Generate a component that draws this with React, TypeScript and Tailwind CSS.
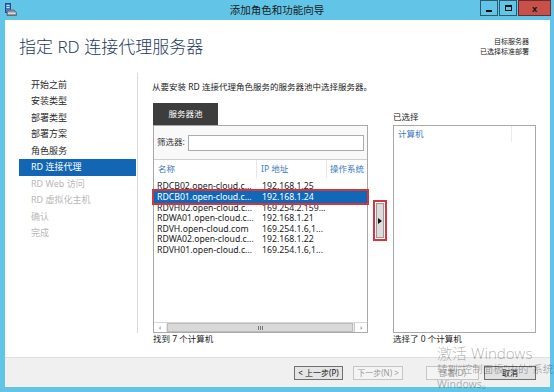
import React from "react";

const rows = [
  ["RDCB02.open-cloud.c...", "192.168.1.25"],
  ["RDCB01.open-cloud.c...", "192.168.1.24"],
  ["RDVH02.open-cloud.c...", "169.254.2.159..."],
  ["RDWA01.open-cloud.c...", "192.168.1.21"],
  ["RDVH.open-cloud.com", "169.254.1.6,1..."],
  ["RDWA02.open-cloud.c...", "192.168.1.22"],
  ["RDVH01.open-cloud.c...", "169.254.1.6,1..."],
];

const nav: [string, "n" | "s" | "d"][] = [
  ["开始之前", "n"],
  ["安装类型", "n"],
  ["部署类型", "n"],
  ["部署方案", "n"],
  ["角色服务", "n"],
  ["RD 连接代理", "s"],
  ["RD Web 访问", "d"],
  ["RD 虚拟化主机", "d"],
  ["确认", "d"],
  ["完成", "d"],
];

function ServerIcon() {
  return (
    <svg width="12" height="14" viewBox="0 0 12 14">
      <rect x="0.5" y="0.5" width="5" height="9" fill="#3b7cc4" stroke="#1d4f8a" strokeWidth="1" />
      <rect x="1.5" y="2" width="3" height="1" fill="#cfe4f7" />
      <rect x="1.5" y="4" width="3" height="1" fill="#cfe4f7" />
      <path d="M2 9 L4 7 H9 L11.5 9.5 V12.5 H2 Z" fill="#8c9299" stroke="#5a5f66" strokeWidth="0.8" />
      <rect x="3" y="9.5" width="7.5" height="1.5" fill="#d8dcdf" />
    </svg>
  );
}

export default function App() {
  return (
    <div className="relative w-[554px] h-[392px] overflow-hidden bg-[#62c5e8] flex flex-col font-['Noto_Sans','Noto_Sans_CJK_SC',sans-serif]">
      {/* title bar */}
      <div className="h-[20px] shrink-0 grid grid-cols-[1fr_auto_1fr] items-start">
        <div className="pl-[5px] pt-[3px]">
          <ServerIcon />
        </div>
        <div className="text-[10.5px] leading-[20px] text-[#1b1b1b]">添加角色和功能向导</div>
        <div className="flex justify-end pr-[3px] gap-[1px]">
          <div className="w-[18px] h-[16px] border border-[#2c5a6b] flex items-end justify-center pb-[3px]">
            <div className="w-[6px] h-[2px] bg-[#111]" />
          </div>
          <div className="w-[18px] h-[16px] border border-[#2c5a6b] flex items-center justify-center">
            <div className="w-[7px] h-[6px] border border-[#111] border-t-2" />
          </div>
          <div className="w-[33px] h-[16px] border border-[#6b2b2b] bg-[#c7504b] flex items-center justify-center text-[9px] font-bold leading-none text-[#1a1a1a]">
            x
          </div>
        </div>
      </div>

      {/* window body */}
      <div className="flex-1 min-h-0 ml-[5px] mr-[4px] mb-[5px] bg-white flex flex-col">
        {/* header */}
        <div className="h-[52px] shrink-0 flex justify-between">
          <div className="pl-[14px] pt-[17px] text-[17px] leading-[20px] font-light text-[#1e3a5c]">指定 RD 连接代理服务器</div>
          <div className="pr-[21px] pt-[17px] text-[7px] leading-[10px] text-right text-[#222]">
            <div>目标服务器</div>
            <div>已选择标准部署</div>
          </div>
        </div>

        {/* main */}
        <div className="flex-1 min-h-0 flex">
          <div className="w-[133px] shrink-0 mt-[1px] h-[260px] border-r border-[#d9d9d9] pt-[3.75px] pl-[14px] pr-[1px]">
            {nav.map(([t, s]) => (
              <div
                key={t}
                className={
                  s === "s"
                    ? "h-[16.5px] leading-[16.5px] pl-[12px] text-[9px] bg-[#1366b3] text-white"
                    : s === "d"
                    ? "h-[16.5px] leading-[16.5px] pl-[12px] text-[9px] text-[#b8b8b8]"
                    : "h-[16.5px] leading-[16.5px] pl-[12px] text-[9px] text-[#2a2a2a]"
                }
              >
                {t}
              </div>
            ))}
          </div>

          <div className="flex-1 pl-[15px] pr-[14px]">
            <div className="mt-[9px] -ml-[1px] text-[8.5px] leading-[12px] text-[#222] whitespace-nowrap">
              从要安装 RD 连接代理角色服务的服务器池中选择服务器。
            </div>
            <div className="mt-[10px] flex items-start">
              {/* left panel */}
              <div className="w-[215px] flex flex-col">
                <div className="w-[65px] h-[22px] bg-[#3d3d3d] text-white text-[8.5px] flex items-center justify-center">
                  服务器池
                </div>
                <div className="h-[208px] border border-[#a9a9a9] flex flex-col bg-white">
                  <div className="h-[34px] shrink-0 border-b border-[#cfcfcf] flex items-center px-[3px] bg-[#f9f9f9]">
                    <span className="text-[8.5px] text-[#333] w-[31px]">筛选器:</span>
                    <div className="flex-1 h-[16px] border border-[#ababab] bg-white" />
                  </div>
                  <div className="h-[18px] shrink-0 flex items-center text-[8.5px] text-[#3a78c2] whitespace-nowrap">
                    <div className="w-[103px] h-full pl-[4px] flex items-center border-r border-[#e6e6e6]">名称</div>
                    <div className="w-[70px] h-full pl-[4px] flex items-center border-r border-[#e6e6e6]">IP 地址</div>
                    <div className="flex-1 h-full pl-[3px] flex items-center overflow-hidden">操作系统</div>
                  </div>
                  <div className="flex-1 pt-[3.4px]">
                    {rows.map(([n, ip], i) =>
                      i === 1 ? (
                        <div
                          key={n}
                          className="relative z-10 h-[12px] -my-[0.7px] leading-[12px] flex text-[8.7px] whitespace-nowrap bg-[#0f69b8] text-white outline-2 outline-[#d4343c]"
                        >
                          <div className="w-[108px] shrink-0 pl-[3px]">{n}</div>
                          <div>{ip}</div>
                        </div>
                      ) : (
                        <div key={n} className="h-[10.6px] leading-[10.6px] flex text-[8.7px] whitespace-nowrap text-[#1a1a1a]">
                          <div className="w-[108px] shrink-0 pl-[3px]">{n}</div>
                          <div>{ip}</div>
                        </div>
                      )
                    )}
                  </div>
                  <div className="h-[10px] shrink-0 flex bg-[#e9e9e9] border-t border-[#d6d6d6]">
                    <div className="w-[12px] bg-white flex items-center justify-center text-[7px] leading-none text-[#555]">‹</div>
                    <div className="flex-1 mx-[1px] bg-[#d9d9d9] border border-[#bcbcbc] flex items-center justify-center">
                      <div className="flex gap-[1px]">
                        <div className="w-[1px] h-[4px] bg-[#777]" />
                        <div className="w-[1px] h-[4px] bg-[#777]" />
                        <div className="w-[1px] h-[4px] bg-[#777]" />
                      </div>
                    </div>
                    <div className="w-[13px] bg-white border-l border-[#c8c8c8] flex items-center justify-center text-[7px] leading-none text-[#555]">›</div>
                  </div>
                </div>
                <div className="text-[8.5px] leading-[12px] text-[#222]">找到 7 个计算机</div>
              </div>

              {/* arrow button */}
              <div className="ml-[5px] mt-[97px] w-[14px] h-[41px] border-2 border-[#d6353d] p-[1px]">
                <div className="w-full h-full bg-[#dcdcdc] border border-[#9a9a9a] flex items-center justify-center">
                  <svg width="4" height="6" viewBox="0 0 4 6">
                    <path d="M0 0 L4 3 L0 6 Z" fill="#111" />
                  </svg>
                </div>
              </div>

              {/* right panel */}
              <div className="ml-[6px] w-[143px] flex flex-col">
                <div className="h-[22px] pt-[8px] text-[8.5px] leading-[12px] text-[#222]">已选择</div>
                <div className="h-[208px] border border-[#a9a9a9] bg-white">
                  <div className="h-[16px] flex text-[8.5px] text-[#3a78c2]">
                    <div className="w-[118px] pl-[4px] flex items-center border-r border-[#ececec]">计算机</div>
                  </div>
                </div>
                <div className="text-[8.5px] leading-[12px] text-[#222]">选择了 0 个计算机</div>
              </div>
            </div>
          </div>
        </div>

        {/* footer */}
        <div className="h-[30px] shrink-0 border-t border-[#dfdfdf] bg-[#f0f0f0] flex justify-end items-start pt-[8px] pr-[14px]">
          <div className="w-[49px] h-[14px] border border-[#707070] bg-[#e5e5e5] text-[8px] leading-[12px] text-[#111] text-center whitespace-nowrap">
            &lt; 上一步(P)
          </div>
          <div className="ml-[10px] w-[50px] h-[14px] border border-[#c6c6c6] bg-[#f4f4f4] text-[8px] leading-[12px] text-[#9a9a9a] text-center whitespace-nowrap">
            下一步(N) &gt;
          </div>
          <div className="ml-[23px] w-[53px] h-[14px] border border-[#c6c6c6] bg-[#f4f4f4] text-[8px] leading-[12px] text-[#9a9a9a] text-center whitespace-nowrap">
            部署(D)
          </div>
          <div className="ml-[5px] w-[52px] h-[14px] border border-[#707070] bg-[#e1e1e1] text-[8px] leading-[12px] text-[#111] text-center whitespace-nowrap">
            取消
          </div>
        </div>
      </div>

      {/* activation watermark */}
      <div className="absolute left-[437px] top-[344px] pointer-events-none text-black/30 whitespace-nowrap">
        <div className="text-[15px] leading-[18px] font-light">激活 Windows</div>
        <div className="text-[10.5px] leading-[15px]">转到“控制面板”中的“系统”以激活</div>
        <div className="text-[10.5px] leading-[15px]">Windows。</div>
      </div>
    </div>
  );
}
